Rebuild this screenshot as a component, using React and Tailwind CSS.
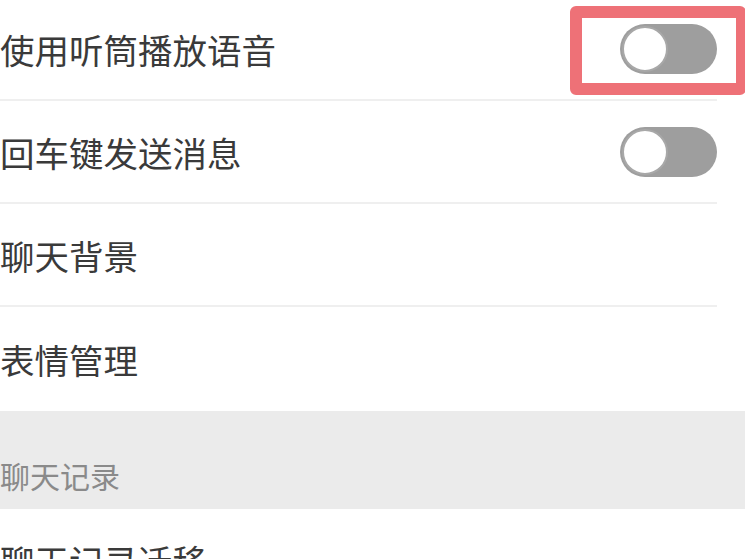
const font = { fontFamily: '"Noto Sans CJK SC", "Noto Sans", sans-serif' }

function Toggle() {
  return (
    <div className="w-[97px] h-[50px] rounded-full bg-[#9e9e9e] p-[2px] flex items-center">
      <div className="w-[46px] h-[46px] rounded-full bg-white border-2 border-[#a8a8a8]" />
    </div>
  )
}

function Row({ label, toggle, last }) {
  return (
    <div
      className={
        'h-[103px] flex items-center justify-between pr-[28px] mr-[28px] ' +
        (last ? '' : 'border-b-2 border-[#efefef]')
      }
    >
      <span className="text-[34.5px] text-[#3a3a3a] leading-none pt-[2px]">{label}</span>
      {toggle && <div className="-mr-[28px]"><Toggle /></div>}
    </div>
  )
}

export default function App() {
  return (
    <div className="relative w-[745px] h-[559px] overflow-hidden bg-white" style={font}>
      <div className="-mt-[2px]">
        <Row label="使用听筒播放语音" toggle />
        <Row label="回车键发送消息" toggle />
        <Row label="聊天背景" />
        <Row label="表情管理" last />
      </div>

      {/* Section header */}
      <div className="mt-[1px] h-[98px] bg-[#ebebeb] flex items-end pb-[19px]">
        <span className="text-[30px] text-[#8a8a8a] leading-none">聊天记录</span>
      </div>

      <div className="h-[103px] flex items-center">
        <span className="text-[34.5px] text-[#3a3a3a] leading-none">聊天记录迁移</span>
      </div>

      {/* Highlight box */}
      <div className="absolute left-[570px] top-[6px] w-[176px] h-[89px] rounded-[6px] border-[12px] border-r-[10px] border-[#ee7177]" />
    </div>
  )
}
